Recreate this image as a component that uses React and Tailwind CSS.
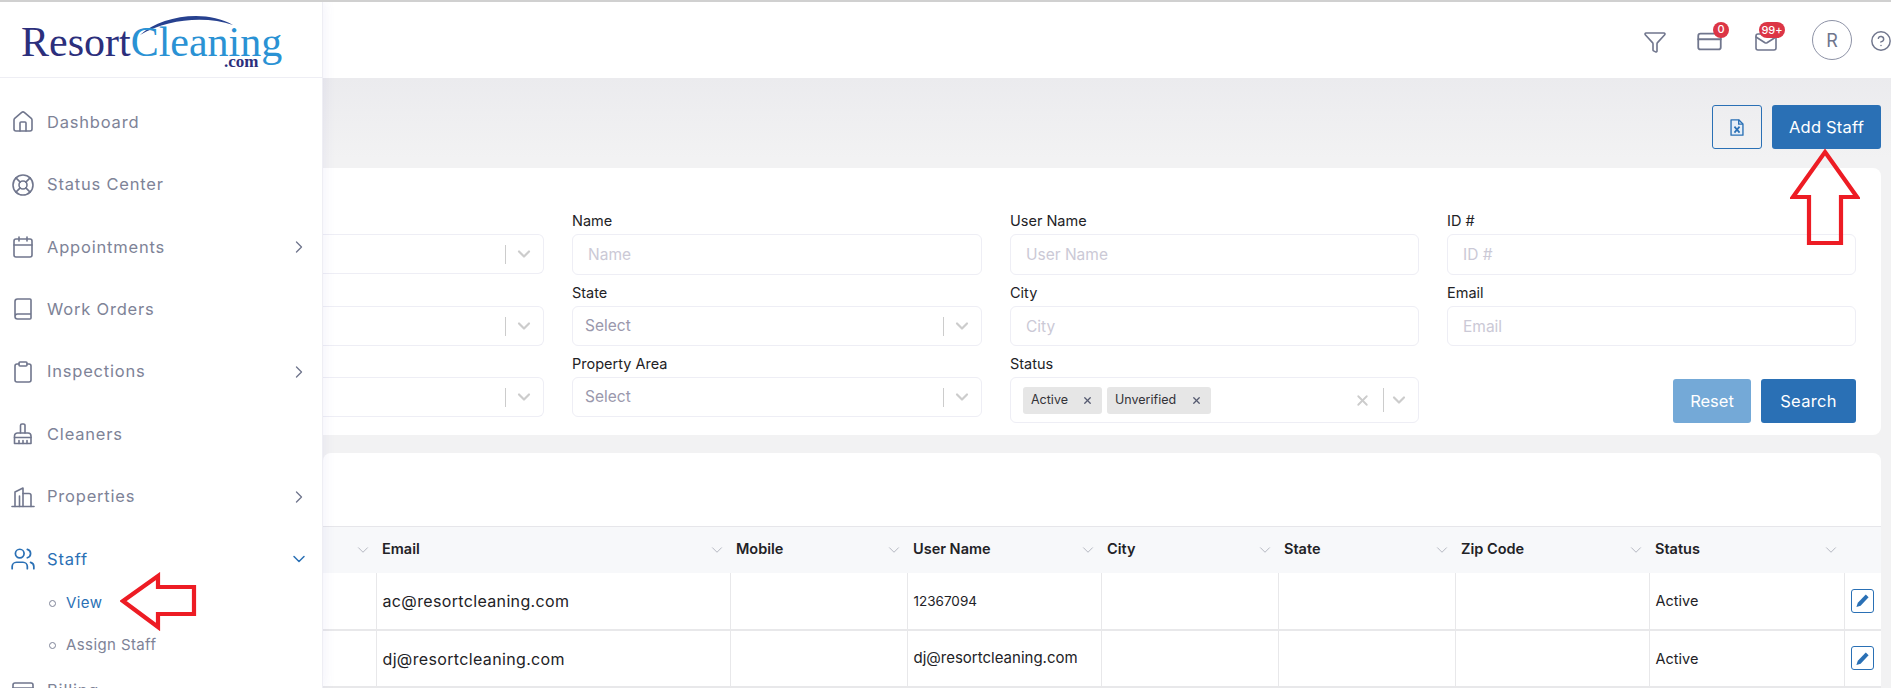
import { Book, Calendar, ChevronDown, ChevronRight, CircleHelp, Clipboard, CreditCard, Funnel, House, LifeBuoy, Mail, Users, X } from "lucide-react";

const navItems = [
  { label: "Dashboard", icon: House },
  { label: "Status Center", icon: LifeBuoy },
  { label: "Appointments", icon: Calendar, arrow: true },
  { label: "Work Orders", icon: Book },
  { label: "Inspections", icon: Clipboard, arrow: true },
  { label: "Cleaners", icon: BroomIcon },
  { label: "Properties", icon: BuildingIcon, arrow: true },
];

const columns = [
  { label: "", width: "w-[53px]" },
  { label: "Email", width: "w-[354px]" },
  { label: "Mobile", width: "w-[177px]" },
  { label: "User Name", width: "w-[194px]" },
  { label: "City", width: "w-[177px]" },
  { label: "State", width: "w-[177px]" },
  { label: "Zip Code", width: "w-[194px]" },
  { label: "Status", width: "w-[195px]" },
];

const rows = [
  { email: "ac@resortcleaning.com", user: "12367094", userSize: "text-[13.5px]" },
  { email: "dj@resortcleaning.com", user: "dj@resortcleaning.com", userSize: "text-[15px]" },
];

function BroomIcon(props) {
  return (
    <svg viewBox="0 0 24 24" fill="none" stroke="currentColor" strokeWidth={props.strokeWidth} strokeLinecap="round" strokeLinejoin="round" className={props.className}>
      <path d="M9.5 11V3.5a1.5 1.5 0 0 1 1.5-1.5h1.5A1.5 1.5 0 0 1 14 3.5V11" />
      <path d="M7 11h10a3 3 0 0 1 3 3v7.5H3.5V14A3 3 0 0 1 7 11z" />
      <path d="M3.5 15.5h16.5M8 18.5v3M12 18.5v3M16 18.5v3" />
    </svg>
  );
}

function BuildingIcon(props) {
  return (
    <svg viewBox="0 0 24 24" fill="none" stroke="currentColor" strokeWidth={props.strokeWidth} strokeLinecap="round" strokeLinejoin="round" className={props.className}>
      <path d="M1 21.5h22" />
      <path d="M4 21.5V7l8-4v18.5" />
      <path d="M12 8.5h6a2 2 0 0 1 2 2v11" />
      <path d="M8.5 21.5V11" />
    </svg>
  );
}

function Logo() {
  return (
    <div className="relative h-[76px] w-[322px] shrink-0 border-b border-[#eeeef4]">
      <svg viewBox="0 0 110 24" className="absolute left-[139px] top-[10px] h-[24px] w-[110px]">
        <path d="M1 23C22 4 66 -3 94 13C68 4 30 6 1 23z" fill="#27418f" />
      </svg>
      <div className="absolute left-[21px] top-[28px] whitespace-nowrap font-['Liberation_Serif',serif] text-[42px] leading-[24px]">
        <span className="text-[#2c2f7c]">Resort</span>
        <span className="text-[#2a92d4]">Cleaning</span>
      </div>
      <div className="absolute left-[224px] top-[54px] font-['Liberation_Serif',serif] text-[17px] font-bold leading-[12px] text-[#2c2f7c]">.com</div>
    </div>
  );
}

function Sidebar() {
  return (
    <aside className="relative z-10 flex h-full w-[323px] shrink-0 flex-col border-r border-[#eeeef4] bg-white shadow-[0_0_12px_rgba(110,100,200,0.1)]">
      <Logo />
      <nav className="flex flex-col pt-[13px]">
        {navItems.map((item) => (
          <div key={item.label} className="flex h-[62.4px] shrink-0 items-center pl-[11px] pr-[13px] text-[#7e8397]">
            <item.icon className="h-[24px] w-[24px] text-[#70768d]" strokeWidth={1.6} />
            <span className="ml-[12px] flex-1 text-[16.5px] tracking-[0.8px]">{item.label}</span>
            {item.arrow && <ChevronRight className="h-[20px] w-[20px] text-[#70768d]" strokeWidth={1.6} />}
          </div>
        ))}
        <div className="flex h-[62.4px] shrink-0 items-center pl-[10px] pr-[13px] text-[#2a70b5]">
          <Users className="h-[26px] w-[26px]" strokeWidth={1.6} />
          <span className="ml-[11px] flex-1 text-[16.5px] tracking-[0.8px]">Staff</span>
          <ChevronDown className="h-[20px] w-[20px]" strokeWidth={1.8} />
        </div>
        <div className="-mt-[8px] flex h-[42px] shrink-0 items-center pl-[49px] text-[15px] text-[#2a70b5]">
          <span className="h-[7px] w-[7px] rounded-full border border-[#7e8397]" />
          <span className="ml-[10px] tracking-[0.4px]">View</span>
        </div>
        <div className="flex h-[42px] shrink-0 items-center pl-[49px] text-[15px] text-[#7e8397]">
          <span className="h-[7px] w-[7px] rounded-full border border-[#7e8397]" />
          <span className="ml-[10px] tracking-[0.4px]">Assign Staff</span>
        </div>
        <div className="mt-[12px] flex h-[62.4px] shrink-0 items-start pl-[11px] text-[#7e8397]">
          <CreditCard className="h-[24px] w-[24px] text-[#70768d]" strokeWidth={1.6} />
          <span className="ml-[12px] text-[16.5px] tracking-[0.8px]">Billing</span>
        </div>
      </nav>
    </aside>
  );
}

function TopBar() {
  return (
    <header className="flex h-[76px] shrink-0 items-center justify-end bg-white text-[#70768d]">
      <Funnel className="mr-[29px] mt-[3px] h-[24px] w-[24px]" strokeWidth={1.6} />
      <div className="relative mr-[31px]">
        <CreditCard className="mt-[2px] h-[27px] w-[27px]" strokeWidth={1.6} />
        <span className="absolute -right-[6px] -top-[4px] flex h-[16px] w-[16px] items-center justify-center rounded-full bg-[#dc3545] text-[11px] font-medium leading-none text-white">0</span>
      </div>
      <div className="relative mr-[34px]">
        <Mail className="mt-[4px] h-[24px] w-[24px]" strokeWidth={1.6} />
        <span className="absolute -right-[7px] -top-[4px] flex h-[16px] w-[26px] items-center justify-center rounded-full bg-[#dc3545] text-[11px] font-medium leading-none text-white">99+</span>
      </div>
      <div className="mr-[18px] flex h-[40px] w-[40px] items-center justify-center rounded-full border border-[#8d92a6] text-[18px] text-[#70768d]">R</div>
      <CircleHelp className="-mr-[1px] mt-[2px] h-[22px] w-[22px] shrink-0" strokeWidth={1.6} />
    </header>
  );
}

function Field({ label, children }) {
  return (
    <div>
      <div className="mb-[3px] h-[20px] text-[14.5px] leading-[20px] text-[#222226]">{label}</div>
      {children}
    </div>
  );
}

function TextInput({ placeholder, tall }) {
  return (
    <input
      readOnly
      placeholder={placeholder}
      className={`${tall ? "h-[41px]" : "h-[40px]"} w-full rounded-md border border-[#eeeef5] px-[15px] text-[15.5px] outline-none placeholder:text-[#cbc9d6]`}
    />
  );
}

function SelectBox({ value, clipped }) {
  return (
    <div className={`flex h-[40px] items-center rounded-md border border-[#eeeef5] pl-[12px] pr-[9px] ${clipped ? "rounded-l-none border-l-0" : ""}`}>
      <span className="flex-1 text-[15.5px] text-[#9a98ac]">{value}</span>
      <span className="h-[19px] w-px bg-[#cccccc]" />
      <ChevronDown className="ml-[8px] h-[20px] w-[20px] text-[#cccccc]" strokeWidth={2.6} />
    </div>
  );
}

function StatusTag({ label, width }) {
  return (
    <span className={`flex h-[27px] items-center justify-between rounded-[3px] bg-[#e6e6e6] pl-[8px] pr-[9px] text-[12.5px] text-[#333338] ${width}`}>
      {label}
      <X className="h-[11px] w-[11px] text-[#555a70]" strokeWidth={2.8} />
    </span>
  );
}

function FilterCard() {
  return (
    <section className="h-[267px] rounded-r-lg bg-white pr-[25px] pt-[43px]">
      <div className="grid grid-cols-[221px_410px_409px_409px] gap-x-[28px] gap-y-[8px]">
        <Field label="">
          <SelectBox clipped />
        </Field>
        <Field label="Name">
          <TextInput tall placeholder="Name" />
        </Field>
        <Field label="User Name">
          <TextInput tall placeholder="User Name" />
        </Field>
        <Field label="ID #">
          <TextInput tall placeholder="ID #" />
        </Field>

        <Field label="">
          <SelectBox clipped />
        </Field>
        <Field label="State">
          <SelectBox value="Select" />
        </Field>
        <Field label="City">
          <TextInput placeholder="City" />
        </Field>
        <Field label="Email">
          <TextInput placeholder="Email" />
        </Field>

        <Field label="">
          <SelectBox clipped />
        </Field>
        <Field label="Property Area">
          <SelectBox value="Select" />
        </Field>
        <Field label="Status">
          <div className="flex h-[46px] items-center gap-[5px] rounded-md border border-[#eeeef5] pl-[12px] pr-[9px]">
            <StatusTag label="Active" width="w-[79px]" />
            <StatusTag label="Unverified" width="w-[104px]" />
            <X className="ml-auto h-[17px] w-[17px] text-[#cccccc]" strokeWidth={2.6} />
            <span className="ml-[7px] h-[24px] w-px bg-[#cccccc]" />
            <ChevronDown className="h-[20px] w-[20px] text-[#cccccc]" strokeWidth={2.6} />
          </div>
        </Field>
        <div className="flex items-end justify-end gap-[10px]">
          <button className="h-[44px] w-[78px] rounded-[3px] bg-[#74a9d7] text-[16.5px] text-white">Reset</button>
          <button className="h-[44px] w-[95px] rounded-[3px] bg-[#2a70b5] text-[16.5px] tracking-[0.3px] text-white">Search</button>
        </div>
      </div>
    </section>
  );
}

function EditButton() {
  return (
    <button className="flex h-[24px] w-[23px] items-center justify-center rounded-[3px] border border-[#2a70b5] text-[#2a70b5]">
      <svg viewBox="0 0 16 16" className="h-[15px] w-[15px]" fill="currentColor">
        <path d="M11.5 1.5l3 3L6 13.5 1.5 15 3 10.5z" />
      </svg>
    </button>
  );
}

function StaffTable() {
  return (
    <section className="mt-[18px] flex-1 rounded-t-lg bg-white pt-[73px]">
      <table className="w-full table-fixed border-collapse">
        <colgroup>
          {columns.map((col) => (
            <col key={col.label} className={col.width} />
          ))}
          <col />
        </colgroup>
        <thead>
          <tr className="h-[46px] border-t border-[#e6e6ea] bg-[#f7f8fa] text-left">
            {columns.map((col) => (
              <th key={col.label} className="pl-[6px] pr-[4px] text-[14.5px] font-semibold text-[#222226]">
                <div className="-mt-[2px] flex items-center justify-between">
                  <span>{col.label}</span>
                  <ChevronDown className="mt-[2px] h-[18px] w-[18px] text-[#9da1ad]" strokeWidth={1} />
                </div>
              </th>
            ))}
            <th />
          </tr>
        </thead>
        <tbody>
          {rows.map((row) => (
            <tr key={row.email} className="h-[57px] border-b-2 border-[#e8e8ea] text-[#222226]">
              <td />
              <td className="border-l border-[#e8e8ea] px-[6px] pt-[1px] text-[16px] tracking-[0.35px]">{row.email}</td>
              <td className="border-l border-[#e8e8ea]" />
              <td className={`border-l border-[#e8e8ea] px-[6px] pt-[1px] ${row.userSize}`}>{row.user}</td>
              <td className="border-l border-[#e8e8ea]" />
              <td className="border-l border-[#e8e8ea]" />
              <td className="border-l border-[#e8e8ea]" />
              <td className="border-l border-[#e8e8ea] px-[6px] pt-[1px] text-[14.5px]">Active</td>
              <td className="border-l border-[#e8e8ea] pl-[6px]">
                <EditButton />
              </td>
            </tr>
          ))}
        </tbody>
      </table>
    </section>
  );
}

function RedArrows() {
  return (
    <>
      <svg viewBox="0 0 80 60" className="absolute left-[120px] top-[570px] z-20 h-[60px] w-[80px]" fill="none" stroke="#ed1c24" strokeWidth={4.2} strokeLinejoin="miter">
        <path d="M3 29L38 4V15H74V42H38V55z" />
      </svg>
      <svg viewBox="0 0 70 100" className="absolute left-[1790px] top-[146px] z-20 h-[100px] w-[70px]" fill="none" stroke="#ed1c24" strokeWidth={4.2} strokeLinejoin="miter">
        <path d="M35 4L67 49H51V95H19V49H3z" />
      </svg>
    </>
  );
}

export default function App() {
  return (
    <div className="relative h-screen w-screen overflow-hidden border-t-2 border-[#d0d0d0] font-['Inter',sans-serif]">
      <div className="flex h-full">
        <Sidebar />
        <div className="flex h-full min-w-0 flex-1 flex-col">
          <TopBar />
          <main className="flex min-h-0 flex-1 flex-col bg-[linear-gradient(#ebebee,#f2f2f3_80px)] pr-[10px]">
            <div className="flex h-[90px] shrink-0 items-start justify-end gap-[10px] pt-[27px]">
              <button className="flex h-[44px] w-[50px] items-center justify-center rounded-[3px] border border-[#2a70b5] text-[#2a70b5]">
                <svg viewBox="0 0 16 20" className="h-[17px] w-[14px]">
                  <path d="M1 1h9l5 5v13H1z" fill="#e6eef7" stroke="currentColor" strokeWidth="1.6" strokeLinejoin="round" />
                  <path d="M10 1v5h5" fill="none" stroke="currentColor" strokeWidth="1.6" />
                  <path d="M5 9l6 7M11 9l-6 7" stroke="currentColor" strokeWidth="2" />
                </svg>
              </button>
              <button className="h-[44px] w-[109px] rounded-[3px] bg-[#2a70b5] text-[16.5px] tracking-[0.2px] text-white">Add Staff</button>
            </div>
            <FilterCard />
            <StaffTable />
          </main>
        </div>
      </div>
      <RedArrows />
    </div>
  );
}
